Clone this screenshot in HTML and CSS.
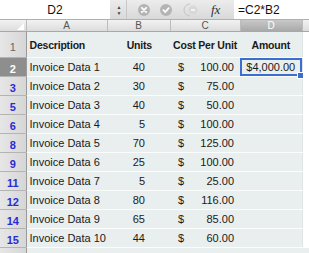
FILE: index.html
```html
<!DOCTYPE html>
<html lang="en">
<head>
    <meta charset="UTF-8">
    <title>Invoice sheet</title>
    <link rel="stylesheet" href="styles.css">
</head>
<body>
    <div class="formula-bar">
        <div class="name-box">D2</div>
        <div class="spinner">&#9650;<br>&#9660;</div>
        <div class="tool-btns">
            <span class="round-btn">
                <svg width="12" height="12" viewBox="0 0 12 12"><circle cx="6" cy="6" r="6" fill="#b4b4b4"/><path d="M3.8 3.8 L8.2 8.2 M8.2 3.8 L3.8 8.2" stroke="#fff" stroke-width="1.8" stroke-linecap="round"/></svg>
            </span>
            <span class="round-btn">
                <svg width="12" height="12" viewBox="0 0 12 12"><circle cx="6" cy="6" r="6" fill="#b4b4b4"/><path d="M3.4 6.2 L5.3 8 L8.7 4.2" stroke="#fff" stroke-width="1.8" fill="none" stroke-linecap="round"/></svg>
            </span>
            <span class="pill-btn">
                <svg width="18" height="14" viewBox="0 0 18 14"><path d="M7 1 A6 6 0 0 0 7 13" stroke="#c4c4c4" fill="none"/><circle cx="10" cy="7" r="4.5" fill="#d8d8d8"/><path d="M8 7 H12" stroke="#fff" stroke-width="1.4"/></svg>
            </span>
            <span class="fx">fx</span>
        </div>
        <div class="formula-input">=C2*B2</div>
    </div>

    <table class="sheet">
        <colgroup>
            <col class="col-rh">
            <col class="col-a">
            <col class="col-b">
            <col class="col-c">
            <col class="col-d">
            <col class="col-e">
        </colgroup>
        <tr class="col-heads">
            <th class="corner"><span class="corner-mark"></span></th>
            <th>A</th>
            <th>B</th>
            <th>C</th>
            <th class="active">D</th>
            <th></th>
        </tr>
        <tr class="title-row">
            <th class="row-head plain">1</th>
            <td>Description</td>
            <td class="num">Units</td>
            <td class="center">Cost Per Unit</td>
            <td class="center">Amount</td>
            <td class="blank"></td>
        </tr>
        <tr>
            <th class="row-head selected">2</th>
            <td>Invoice Data 1</td>
            <td class="units">40</td>
            <td class="money"><span>$</span><span>100.00</span></td>
            <td class="current">$4,000.00<span class="handle"></span></td>
            <td class="blank"></td>
        </tr>
        <tr>
            <th class="row-head">3</th>
            <td>Invoice Data 2</td>
            <td class="units">30</td>
            <td class="money"><span>$</span><span>75.00</span></td>
            <td></td>
            <td class="blank"></td>
        </tr>
        <tr>
            <th class="row-head">5</th>
            <td>Invoice Data 3</td>
            <td class="units">40</td>
            <td class="money"><span>$</span><span>50.00</span></td>
            <td></td>
            <td class="blank"></td>
        </tr>
        <tr>
            <th class="row-head">6</th>
            <td>Invoice Data 4</td>
            <td class="units">5</td>
            <td class="money"><span>$</span><span>100.00</span></td>
            <td></td>
            <td class="blank"></td>
        </tr>
        <tr>
            <th class="row-head">8</th>
            <td>Invoice Data 5</td>
            <td class="units">70</td>
            <td class="money"><span>$</span><span>125.00</span></td>
            <td></td>
            <td class="blank"></td>
        </tr>
        <tr>
            <th class="row-head">9</th>
            <td>Invoice Data 6</td>
            <td class="units">25</td>
            <td class="money"><span>$</span><span>100.00</span></td>
            <td></td>
            <td class="blank"></td>
        </tr>
        <tr>
            <th class="row-head">11</th>
            <td>Invoice Data 7</td>
            <td class="units">5</td>
            <td class="money"><span>$</span><span>25.00</span></td>
            <td></td>
            <td class="blank"></td>
        </tr>
        <tr>
            <th class="row-head">12</th>
            <td>Invoice Data 8</td>
            <td class="units">80</td>
            <td class="money"><span>$</span><span>116.00</span></td>
            <td></td>
            <td class="blank"></td>
        </tr>
        <tr>
            <th class="row-head">14</th>
            <td>Invoice Data 9</td>
            <td class="units">65</td>
            <td class="money"><span>$</span><span>85.00</span></td>
            <td></td>
            <td class="blank"></td>
        </tr>
        <tr>
            <th class="row-head">15</th>
            <td>Invoice Data 10</td>
            <td class="units">44</td>
            <td class="money"><span>$</span><span>60.00</span></td>
            <td></td>
            <td class="blank"></td>
        </tr>
        <tr class="empty-row">
            <th class="row-head">17</th>
            <td></td>
            <td></td>
            <td></td>
            <td></td>
            <td></td>
        </tr>
    </table>
</body>
</html>
```

FILE: styles.css
```css
body {
    margin: 0;
    background: #ffffff;
    font-family: "Liberation Sans", Arial, sans-serif;
    font-size: 11px;
    color: #1a1a1a;
    overflow: hidden;
}
.formula-bar {
    display: flex;
    height: 19px;
    background: linear-gradient(#ececec, #d9d9d9);
    border-bottom: 1px solid #b0b0b0;
}
.name-box {
    width: 110px;
    background: #ffffff;
    display: flex;
    align-items: center;
    justify-content: center;
    font-size: 12px;
    color: #111;
}
.spinner {
    width: 14px;
    font-size: 5px;
    line-height: 6px;
    color: #444;
    display: flex;
    align-items: center;
    justify-content: center;
    text-align: center;
    margin-left: 2px;
}
.tool-btns {
    display: flex;
    align-items: center;
    gap: 10px;
    padding-left: 11px;
    width: 96px;
    border-left: 1px solid #c8c8c8;
}
.round-btn, .pill-btn {
    display: flex;
    align-items: center;
}
.pill-btn {
    margin-left: 1px;
}
.fx {
    font-family: "Liberation Serif", "Times New Roman", serif;
    font-style: italic;
    font-size: 13px;
    color: #333;
    margin-left: 0;
}
.formula-input {
    flex: 1;
    background: #ffffff;
    display: flex;
    align-items: center;
    padding-left: 4px;
    font-size: 12px;
    color: #111;
}
.sheet {
    border-collapse: collapse;
    table-layout: fixed;
    width: 309px;
}
.col-rh { width: 26px; }
.col-a { width: 81px; }
.col-b { width: 63px; }
.col-c { width: 70px; }
.col-d { width: 62px; }
.col-e { width: 7px; }
.sheet td, .sheet th {
    padding: 0;
    white-space: nowrap;
    overflow: hidden;
}
.col-heads th {
    height: 11px;
    font-size: 10px;
    font-weight: normal;
    color: #555;
    background: linear-gradient(#f2f2f2, #dcdcdc);
    border-right: 1px solid #bcbcbc;
    border-bottom: 1px solid #a8a8a8;
    line-height: 11px;
}
.col-heads th.active {
    background: linear-gradient(#c8c8c8, #a9a9a9);
    color: #fff;
}
.corner {
    position: relative;
}
.corner-mark {
    position: absolute;
    right: 2px;
    bottom: 1px;
    width: 0;
    height: 0;
    border-left: 7px solid transparent;
    border-bottom: 7px solid #ffffff;
}
.row-head {
    background: linear-gradient(90deg, #e6e6e6, #d6d6d6);
    color: #2b2bd6;
    font-size: 11px;
    font-weight: bold;
    text-align: center;
    border-right: 1px solid #9a9a9a;
    border-bottom: 1px solid #b4b4b4;
    padding-top: 4px !important;
}
.row-head.plain {
    color: #666;
    font-weight: normal;
}
.row-head.selected {
    background: #8e8e8e;
    color: #fff;
}
.sheet tr td {
    height: 18px;
    background: #e9eeee;
    border-bottom: 1px solid #fbfcfc;
    padding-left: 3px;
}
.title-row td {
    height: 21px;
    background: #b9d0d6;
    font-weight: bold;
    font-size: 10.5px;
    letter-spacing: -0.2px;
    border-bottom: 1px solid #dde6e8;
}
.title-row .row-head {
    height: 21px;
}
.sheet td.num {
    text-align: right;
    padding-right: 18px;
}
.sheet td.center {
    text-align: center;
    padding-left: 0;
}
.sheet td.units {
    text-align: right;
    padding-right: 25px;
}
.money span:first-child {
    float: left;
    padding-left: 5px;
}
.money span:last-child {
    float: right;
    padding-right: 6px;
}
.sheet td.current {
    position: relative;
    box-shadow: inset 0 0 0 2px #3c6ed0;
    text-align: center;
    padding-left: 0;
    overflow: visible;
}
.handle {
    position: absolute;
    right: -2px;
    bottom: -3px;
    width: 5px;
    height: 5px;
    background: #3c6ed0;
    border: 1px solid #fff;
}
.sheet td.blank, .empty-row td {
    background: #ffffff;
    border-bottom: 1px solid #ffffff;
}
.sheet tr td.blank {
    border-left: 1px solid #dfe3e3;
}
.empty-row th {
    height: 8px;
}
```
